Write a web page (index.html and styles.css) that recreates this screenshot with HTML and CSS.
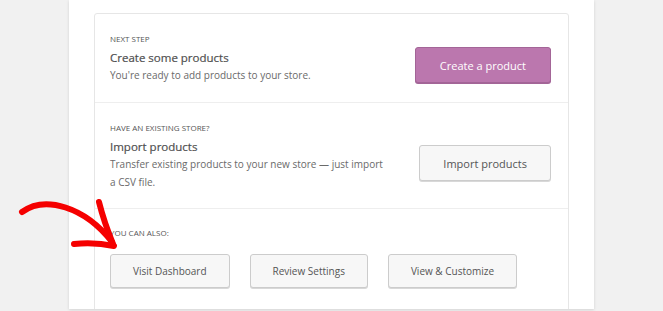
FILE: index.html
```html
<!DOCTYPE html>
<html lang="en">
<head>
    <meta charset="UTF-8">
    <meta name="viewport" content="width=device-width, initial-scale=1.0">
    <title>Store Setup - Ready</title>
    <link rel="stylesheet" href="styles.css">
</head>
<body>
    <div class="setup">
        <div class="next-steps">
            <div class="step">
                <div class="step-text">
                    <p class="step-label">Next step</p>
                    <h3>Create some products</h3>
                    <p class="step-desc">You're ready to add products to your store.</p>
                </div>
                <a href="#" class="button primary">Create a product</a>
            </div>

            <div class="step">
                <div class="step-text">
                    <p class="step-label">Have an existing store?</p>
                    <h3>Import products</h3>
                    <p class="step-desc">Transfer existing products to your new store — just import a CSV file.</p>
                </div>
                <a href="#" class="button">Import products</a>
            </div>

            <div class="step also">
                <p class="step-label">You can also:</p>
                <div class="also-links">
                    <a href="#" class="button small">Visit Dashboard</a>
                    <a href="#" class="button small">Review Settings</a>
                    <a href="#" class="button small">View &amp; Customize</a>
                </div>
            </div>
        </div>
    </div>

    <!-- hand drawn annotation arrow -->
    <svg class="arrow" viewBox="0 0 663 311" width="663" height="311">
        <path d="M22 212 C 45 195, 85 207, 112 242" />
        <path d="M99 202 Q 104 222, 113 244" />
        <path d="M74 244 Q 95 242, 114 246" />
    </svg>
</body>
</html>
```

FILE: styles.css
```css
* {
    margin: 0;
    padding: 0;
    box-sizing: border-box;
}

body {
    font-family: 'Open Sans', 'Noto Sans', sans-serif;
    background: #f1f1f1;
    color: #555;
    height: 311px;
    overflow: hidden;
    position: relative;
}

.setup {
    width: 525px;
    height: 309px;
    margin: 0 auto;
    padding: 13px 25px 0;
    background: #fff;
    box-shadow: 0 1px 3px rgba(0, 0, 0, 0.13);
    overflow: hidden;
}

.next-steps {
    border: 1px solid #e6e6e6;
    border-radius: 3px;
    height: 320px;
}

.step {
    display: flex;
    align-items: center;
    justify-content: space-between;
    padding: 19px 17px 17px 15px;
    border-bottom: 1px solid #eee;
}

.step:first-child {
    padding-bottom: 18px;
}

.step-text {
    max-width: 278px;
}

.step-label {
    font-size: 8px;
    line-height: 12px;
    text-transform: uppercase;
    color: #555;
}

.step h3 {
    font-size: 11.5px;
    font-weight: 400;
    line-height: 16px;
    margin-top: 5px;
    color: #4f4f4f;
    -webkit-text-stroke: 0.2px #4f4f4f;
}

.step-desc {
    font-size: 10px;
    line-height: 18px;
    color: #6a6a6a;
}

.button {
    display: inline-flex;
    align-items: center;
    justify-content: center;
    height: 36px;
    padding: 0 23px;
    margin-top: 13px;
    font-size: 11px;
    color: #555;
    text-decoration: none;
    background: #f7f7f7;
    border: 1px solid #ccc;
    border-radius: 3px;
    box-shadow: 0 1px 0 #d8d8d8;
    white-space: nowrap;
}

.button.primary {
    padding: 0 24px;
    color: #fff;
    background: #bb77ae;
    border-color: #a36597;
    box-shadow: 0 1px 0 #a36597;
}

.step.also {
    display: block;
    padding-top: 18px;
    border-bottom: none;
}

.also-links {
    display: flex;
    gap: 20px;
    margin-top: 15px;
}

.button.small {
    height: 34px;
    padding: 0 22px;
    margin-top: 0;
    font-size: 10px;
}

.arrow {
    position: absolute;
    top: 0;
    left: 0;
    pointer-events: none;
}

.arrow path {
    fill: none;
    stroke: #f50000;
    stroke-width: 6;
    stroke-linecap: round;
    stroke-linejoin: round;
}
```
